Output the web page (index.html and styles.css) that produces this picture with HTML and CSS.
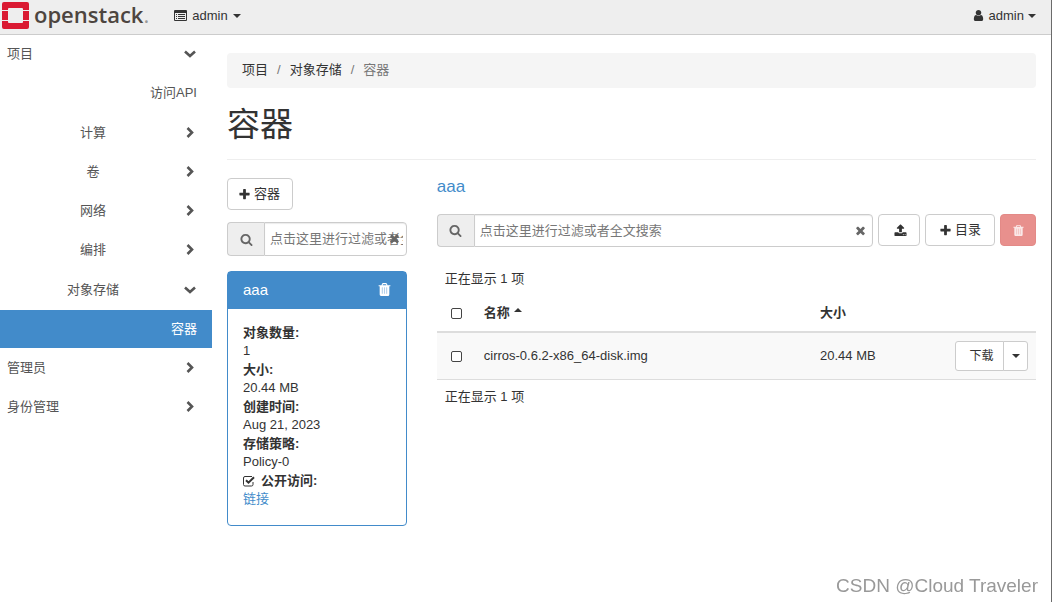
FILE: index.html
```html
<!DOCTYPE html>
<html lang="zh-CN">
<head>
<meta charset="utf-8">
<title>容器 - OpenStack Dashboard</title>
<link rel="stylesheet" href="styles.css">
</head>
<body>
<svg class="sprite" aria-hidden="true">
  <symbol id="i-search" viewBox="0 0 1792 1792"><path d="M1216 832q0-185-131.5-316.5t-316.5-131.5-316.5 131.5-131.5 316.5 131.5 316.5 316.5 131.5 316.5-131.5 131.5-316.5zm512 832q0 52-38 90t-90 38q-54 0-90-38l-343-342q-179 124-399 124-143 0-273.5-55.5t-225-150-150-225-55.5-273.5 55.5-273.5 150-225 225-150 273.5-55.5 273.5 55.5 225 150 150 225 55.5 273.5q0 220-124 399l343 343q37 37 37 90z"/></symbol>
  <symbol id="i-plus" viewBox="0 0 1792 1792"><path d="M1600 736v192q0 40-28 68t-68 28h-416v416q0 40-28 68t-68 28h-192q-40 0-68-28t-28-68v-416h-416q-40 0-68-28t-28-68v-192q0-40 28-68t68-28h416v-416q0-40 28-68t68-28h192q40 0 68 28t28 68v416h416q40 0 68 28t28 68z"/></symbol>
  <symbol id="i-times" viewBox="0 0 1792 1792"><path d="M1490 1322q0 40-28 68l-136 136q-28 28-68 28t-68-28l-294-294-294 294q-28 28-68 28t-68-28l-136-136q-28-28-28-68t28-68l294-294-294-294q-28-28-28-68t28-68l136-136q28-28 68-28t68 28l294 294 294-294q28-28 68-28t68 28l136 136q28 28 28 68t-28 68l-294 294 294 294q28 28 28 68z"/></symbol>
  <symbol id="i-trash" viewBox="0 0 1792 1792"><path d="M704 1376v-704q0-14-9-23t-23-9h-64q-14 0-23 9t-9 23v704q0 14 9 23t23 9h64q14 0 23-9t9-23zm256 0v-704q0-14-9-23t-23-9h-64q-14 0-23 9t-9 23v704q0 14 9 23t23 9h64q14 0 23-9t9-23zm256 0v-704q0-14-9-23t-23-9h-64q-14 0-23 9t-9 23v704q0 14 9 23t23 9h64q14 0 23-9t9-23zm-544-992h448l-48-117q-7-9-17-11h-317q-10 2-17 11zm928 32v64q0 14-9 23t-23 9h-96v948q0 83-47 143.5t-113 60.5h-832q-66 0-113-58.5t-47-141.5v-952h-96q-14 0-23-9t-9-23v-64q0-14 9-23t23-9h309l70-167q15-37 54-63t79-26h320q40 0 79 26t54 63l70 167h309q14 0 23 9t9 23z"/><path d="M500 600h800v840h-800z" opacity="0.6"/></symbol>
  <symbol id="i-upload" viewBox="0 0 1792 1792"><path d="M1344 1472q0-26-19-45t-45-19-45 19-19 45 19 45 45 19 45-19 19-45zm256 0q0-26-19-45t-45-19-45 19-19 45 19 45 45 19 45-19 19-45zm128-224v320q0 40-28 68t-68 28h-1472q-40 0-68-28t-28-68v-320q0-40 28-68t68-28h427q21 56 70.5 92t110.5 36h256q61 0 110.5-36t70.5-92h427q40 0 68 28t28 68zm-325-648q-17 40-59 40h-256v448q0 26-19 45t-45 19h-256q-26 0-45-19t-19-45v-448h-256q-42 0-59-40-17-39 14-69l448-448q18-19 45-19t45 19l448 448q31 30 14 69z"/></symbol>
  <symbol id="i-user" viewBox="0 0 1792 1792"><path d="M1536 1399q0 109-62.5 187t-150.5 78h-854q-88 0-150.5-78t-62.5-187q0-85 8.5-160.5t31.5-152 58.5-131 94-89 134.5-34.5q131 128 313 128t313-128q76 0 134.5 34.5t94 89 58.5 131 31.5 152 8.5 160.5zm-256-887q0 159-112.5 271.5t-271.5 112.5-271.5-112.5-112.5-271.5 112.5-271.5 271.5-112.5 271.5 112.5 112.5 271.5z"/></symbol>
  <symbol id="i-list" viewBox="0 0 13 11"><path fill-rule="evenodd" d="M1 0h11a1 1 0 0 1 1 1v9a1 1 0 0 1-1 1H1a1 1 0 0 1-1-1V1a1 1 0 0 1 1-1zM1 3v7h11V3zM2 4h1v1H2zM4 4h7v1H4zM2 6h1v1H2zM4 6h7v1H4zM2 8h1v1H2zM4 8h7v1H4z"/></symbol>
  <symbol id="i-right" viewBox="0 0 14 14"><path d="M4.500 2l4.500 4.500-4.500 4.500" fill="none" stroke="currentColor" stroke-width="2.600"/></symbol>
  <symbol id="i-down" viewBox="0 0 14 14"><path d="M2 4.500l5 4.500 5-4.500" fill="none" stroke="currentColor" stroke-width="2.600"/></symbol>
  <symbol id="i-check" viewBox="0 0 12 12"><path d="M10 7v2.500a1.500 1.500 0 0 1-1.500 1.500H2A1.500 1.500 0 0 1 .5 9.500V3A1.500 1.500 0 0 1 2 1.500h7" fill="none" stroke="currentColor"/><path d="M3 5.200l2.500 2.500L11 2.200" fill="none" stroke="currentColor" stroke-width="2"/></symbol>
</svg>

<header class="topbar">
  <a class="brand" href="#" aria-label="openstack">
    <svg class="brand-mark" viewBox="0 0 27 27" aria-hidden="true"><path fill="#da1a32" d="M2 0h23a2 2 0 0 1 2 2v6h-6V7a1 1 0 0 0-1-1H7a1 1 0 0 0-1 1v1H0V2a2 2 0 0 1 2-2zM0 9h6v9H0zM21 9h6v9h-6zM0 19h6v1a1 1 0 0 0 1 1h13a1 1 0 0 0 1-1v-1h6v6a2 2 0 0 1-2 2H2a2 2 0 0 1-2-2z"/></svg>
    <span class="brand-name">openstack<span class="brand-dot">.</span></span>
  </a>
  <button class="menu" type="button"><svg class="icon-list"><use href="#i-list"/></svg>admin<span class="caret"></span></button>
  <button class="menu menu-user" type="button"><svg class="icon"><use href="#i-user"/></svg>admin<span class="caret"></span></button>
</header>

<div class="layout">
  <nav class="sidebar">
    <a class="row" href="#">项目<svg class="chevron"><use href="#i-down"/></svg></a>
    <div class="group">
      <a class="row row-leaf row-api" href="#">访问API</a>
      <a class="row row-sub" href="#"><span>计算</span><svg class="chevron"><use href="#i-right"/></svg></a>
      <a class="row row-sub" href="#"><span>卷</span><svg class="chevron"><use href="#i-right"/></svg></a>
      <a class="row row-sub" href="#"><span>网络</span><svg class="chevron"><use href="#i-right"/></svg></a>
      <a class="row row-sub" href="#"><span>编排</span><svg class="chevron"><use href="#i-right"/></svg></a>
      <div class="group group-open">
        <a class="row row-sub" href="#"><span>对象存储</span><svg class="chevron"><use href="#i-down"/></svg></a>
        <a class="row row-leaf active" href="#">容器</a>
      </div>
    </div>
    <a class="row" href="#">管理员<svg class="chevron"><use href="#i-right"/></svg></a>
    <a class="row" href="#">身份管理<svg class="chevron"><use href="#i-right"/></svg></a>
  </nav>

  <main class="content">
    <nav class="breadcrumb"><a href="#">项目</a><i>/</i><a href="#">对象存储</a><i>/</i><span>容器</span></nav>
    <h1 class="title">容器</h1>
    <div class="columns">
      <section class="containers">
        <button class="btn" type="button"><svg class="icon"><use href="#i-plus"/></svg>容器</button>
        <div class="search">
          <label class="addon" for="find-container"><svg class="icon"><use href="#i-search"/></svg></label>
          <input id="find-container" type="text" placeholder="点击这里进行过滤或者全文搜索">
          <button class="clear" type="button" aria-label="清除"><svg class="icon"><use href="#i-times"/></svg></button>
        </div>
        <article class="card">
          <header class="card-head"><span>aaa</span><button type="button" aria-label="删除"><svg class="icon icon-lg"><use href="#i-trash"/></svg></button></header>
          <div class="card-body">
            <dl>
              <dt>对象数量:</dt><dd>1</dd>
              <dt>大小:</dt><dd>20.44 MB</dd>
              <dt>创建时间:</dt><dd>Aug 21, 2023</dd>
              <dt>存储策略:</dt><dd>Policy-0</dd>
            </dl>
            <label class="public"><span class="tick"><input type="checkbox" checked><svg><use href="#i-check"/></svg></span>公开访问:</label>
            <a class="link" href="#">链接</a>
          </div>
        </article>
      </section>

      <section class="objects">
        <h2 class="path"><a class="link" href="#">aaa</a></h2>
        <div class="toolbar">
          <div class="search">
            <label class="addon" for="find-object"><svg class="icon"><use href="#i-search"/></svg></label>
            <input id="find-object" type="text" placeholder="点击这里进行过滤或者全文搜索">
            <button class="clear" type="button" aria-label="清除"><svg class="icon"><use href="#i-times"/></svg></button>
          </div>
          <button class="btn btn-upload" type="button" aria-label="上传"><svg class="icon"><use href="#i-upload"/></svg></button>
          <button class="btn btn-folder" type="button"><svg class="icon"><use href="#i-plus"/></svg>目录</button>
          <button class="btn btn-danger" type="button" aria-label="删除" disabled><svg class="icon"><use href="#i-trash"/></svg></button>
        </div>
        <p class="count">正在显示 1 项</p>
        <table class="files">
          <thead>
            <tr>
              <th class="col-check"><input class="box" type="checkbox" aria-label="全选"></th>
              <th>名称<span class="sort"></span></th>
              <th class="col-size">大小</th>
              <th class="col-action"></th>
            </tr>
          </thead>
          <tbody>
            <tr>
              <td class="col-check"><input class="box" type="checkbox" aria-label="选择 cirros-0.6.2-x86_64-disk.img"></td>
              <td>cirros-0.6.2-x86_64-disk.img</td>
              <td>20.44 MB</td>
              <td><div class="split"><button class="split-main" type="button">下载</button><button class="split-toggle" type="button" aria-label="更多"><span class="caret"></span></button></div></td>
            </tr>
          </tbody>
        </table>
        <p class="count">正在显示 1 项</p>
      </section>
    </div>
  </main>
</div>
<div class="watermark">CSDN @Cloud Traveler</div>
</body>
</html>
```
FILE: styles.css
```css
* { box-sizing: border-box; }

body {
  margin: 0;
  min-height: 100vh;
  border-right: 1px solid #6b6b6b;
  background: #fff;
  color: #333;
  font: 13px/18px "Liberation Sans", "Noto Sans CJK SC", sans-serif;
}

a { color: inherit; text-decoration: none; }
button, input { font: inherit; color: inherit; }
button { margin: 0; padding: 0; border: 0; background: none; cursor: pointer; }

.sprite { position: absolute; width: 0; height: 0; }
.icon { flex: none; width: 13px; height: 13px; fill: currentColor; }
.icon-lg { width: 15px; height: 15px; }
.icon-list { width: 13px; height: 11px; fill: currentColor; }
.chevron { flex: none; width: 14px; height: 14px; }

.caret {
  border: 4px solid transparent;
  border-top-color: currentColor;
  border-bottom: 0;
}

.topbar {
  display: flex;
  align-items: center;
  height: 35px;
  padding: 0 15px 3px 2px;
  border-bottom: 1px solid #ccc;
  background: #eee;
}
.brand { display: flex; align-items: center; gap: 5px; }
.brand-mark { width: 27px; height: 27px; }
.brand-name {
  padding-bottom: 3px;
  color: #4d453f;
  font: 600 22px/25px "Open Sans", sans-serif;
}
.brand-dot { color: #999; font-weight: 400; }
.menu { display: flex; align-items: center; gap: 5px; margin-left: 25px; }
.menu-user { gap: 4px; margin-left: auto; }

.layout { display: flex; }

.sidebar {
  display: flex;
  flex-direction: column;
  gap: 1px;
  flex: none;
  width: 212px;
  color: #555;
}
.group { display: flex; flex-direction: column; gap: 1px; }
.group-open { margin-top: 1px; }
.row {
  display: flex;
  align-items: center;
  justify-content: space-between;
  height: 38px;
  padding: 0 15px 1px 7px;
}
.row-sub span { flex: 1; margin-right: 4px; text-align: center; }
.row-leaf { justify-content: flex-end; }
.row-api { margin-bottom: 1px; }
.active { background: #428bca; color: #fff; }

.content { flex: 1; min-width: 0; padding: 18px 15px; }

.breadcrumb {
  display: flex;
  align-items: center;
  height: 35px;
  padding: 0 15px 2px;
  border-radius: 4px;
  background: #f5f5f5;
}
.breadcrumb i { padding: 0 9px; color: #777; font-style: normal; }
.breadcrumb span { color: #777; }

.title {
  margin: 0 0 18px;
  padding: 17px 0 14px;
  border-bottom: 1px solid #eee;
  font-size: 33px;
  font-weight: 400;
  line-height: 40px;
}

.columns { display: grid; grid-template-columns: repeat(4, minmax(0, 1fr)); gap: 30px; }
.objects { grid-column: span 3; }

.btn {
  display: inline-flex;
  align-items: center;
  justify-content: center;
  gap: 3px;
  height: 32px;
  padding: 0 12px 0 10px;
  border: 1px solid #ccc;
  border-radius: 4px;
  background: #fff;
}
.btn-upload { width: 42px; padding: 0 10px 0 12px; }
.btn-folder { width: 70px; padding: 0 11px; }
.btn-danger { width: 36px; padding: 0; border-color: #e38a87; background: #e8908d; color: #fff; }
.btn-danger .icon { opacity: 0.8; }

.search { position: relative; display: flex; height: 34px; }
.addon {
  display: flex;
  align-items: center;
  justify-content: center;
  flex: none;
  width: 37px;
  border: 1px solid #ccc;
  border-right: 0;
  border-radius: 4px 0 0 4px;
  background: #eee;
  color: #666;
}
.search input {
  flex: 1;
  min-width: 0;
  padding: 0 3px 0 5px;
  border: 1px solid #ccc;
  border-radius: 0 4px 4px 0;
  box-shadow: inset 0 1px 1px rgba(0, 0, 0, 0.08);
}
.search input::placeholder { color: #777; }
.clear { position: absolute; top: 10px; right: 6px; display: flex; color: #666; }

.containers .search { margin: 12px 0 15px; }

.card { border: 1px solid #428bca; border-radius: 4px; }
.card-head {
  display: flex;
  align-items: center;
  justify-content: space-between;
  height: 37px;
  padding: 0 14px 2px 15px;
  background: #428bca;
  color: #fff;
  font-size: 15px;
}
.card-head button { display: flex; }
.card-body { padding: 14px 15px 17px; }
.card dl, .card dd { margin: 0; }
.card dt { font-weight: 700; line-height: 19px; }
.public { display: flex; align-items: center; gap: 6px; font-weight: 700; line-height: 19px; }
.tick { position: relative; display: flex; }
.tick input { width: 12px; height: 12px; margin: 0; appearance: none; }
.tick svg { position: absolute; inset: 0; width: 12px; height: 12px; pointer-events: none; }
.link { color: #428bca; }

.path { margin: 0 0 18px; font-size: 17px; font-weight: 400; line-height: 18px; }
.toolbar { display: flex; gap: 5px; }
.toolbar .search { flex: 1; height: 33px; }

.count { margin: 0; padding: 8px; }
.toolbar + .count { margin-top: 15px; }

.files { width: 100%; border-collapse: collapse; table-layout: fixed; }
.files th, .files td { padding: 8px; text-align: left; }
.files th { padding: 8px 8px 9px; border-bottom: 2px solid #ddd; }
.files td { border-bottom: 1px solid #ddd; background: #f9f9f9; }
.files .col-check { width: 39px; padding-left: 14px; padding-right: 0; }
.col-size { width: 112px; }
.col-action { width: 112px; }
.box {
  display: block;
  width: 11px;
  height: 11px;
  margin: 0;
  border: 1px solid #444;
  border-radius: 2px;
  background: #fff;
  appearance: none;
}
.sort {
  display: inline-block;
  margin-left: 4px;
  border: 4px solid transparent;
  border-top: 0;
  border-bottom-color: currentColor;
  vertical-align: 5px;
}

.split { display: flex; justify-content: flex-end; }
.split button {
  height: 30px;
  border: 1px solid #ccc;
  background: #fff;
  font-size: 12px;
}
.split .split-main { width: 49px; padding-left: 4px; border-radius: 3px 0 0 3px; }
.split .split-toggle {
  display: flex;
  align-items: center;
  justify-content: center;
  width: 25px;
  margin-left: -1px;
  border-radius: 0 3px 3px 0;
}

.watermark {
  position: fixed;
  right: 14px;
  bottom: 4px;
  color: #999;
  font-size: 19px;
  line-height: 24px;
}
```
